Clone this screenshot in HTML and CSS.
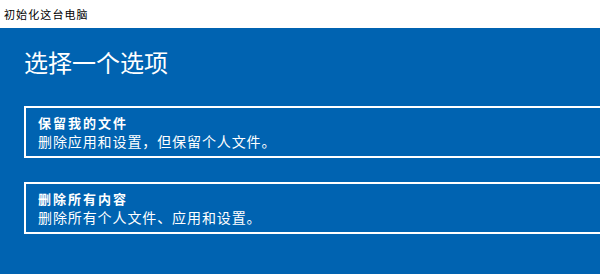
FILE: index.html
```html
<!DOCTYPE html>
<html lang="zh-CN">
<head>
<meta charset="utf-8">
<title>初始化这台电脑</title>
<link rel="stylesheet" href="styles.css">
</head>
<body>
<div class="titlebar">初始化这台电脑</div>
<main class="panel">
  <h1 class="heading">选择一个选项</h1>
  <div class="options">
    <div class="option">
      <div class="opt-title">保留我的文件</div>
      <div class="opt-desc">删除应用和设置，但保留个人文件。</div>
    </div>
    <div class="option">
      <div class="opt-title">删除所有内容</div>
      <div class="opt-desc">删除所有个人文件、应用和设置。</div>
    </div>
  </div>
</main>
</body>
</html>
```

FILE: styles.css
```css
html, body {
  margin: 0;
  padding: 0;
  height: 100%;
  overflow: hidden;
}
body {
  font-family: "Noto Sans CJK SC", "Noto Sans", sans-serif;
  background: #0063b1;
  display: flex;
  flex-direction: column;
}
.titlebar {
  height: 28px;
  background: #ffffff;
  color: #000000;
  font-size: 11px;
  letter-spacing: 1.1px;
  line-height: 28px;
  padding-left: 4px;
  flex: none;
}
.panel {
  flex: 1;
  background: #0063b1;
  color: #ffffff;
  padding: 18px 0 0 24px;
}
.heading {
  margin: 0;
  font-size: 24px;
  font-weight: normal;
  line-height: 32px;
}
.options {
  margin-top: 28px;
  display: flex;
  flex-direction: column;
  gap: 24px;
}
.option {
  border: 2px solid #ffffff;
  border-right: none;
  padding: 6px 0 0 12px;
  height: 42px;
}
.opt-title {
  font-size: 13px;
  font-weight: bold;
  letter-spacing: 2px;
  line-height: 17px;
}
.opt-desc {
  margin-top: 1px;
  font-size: 14px;
  letter-spacing: 0.9px;
  line-height: 18px;
}
```
